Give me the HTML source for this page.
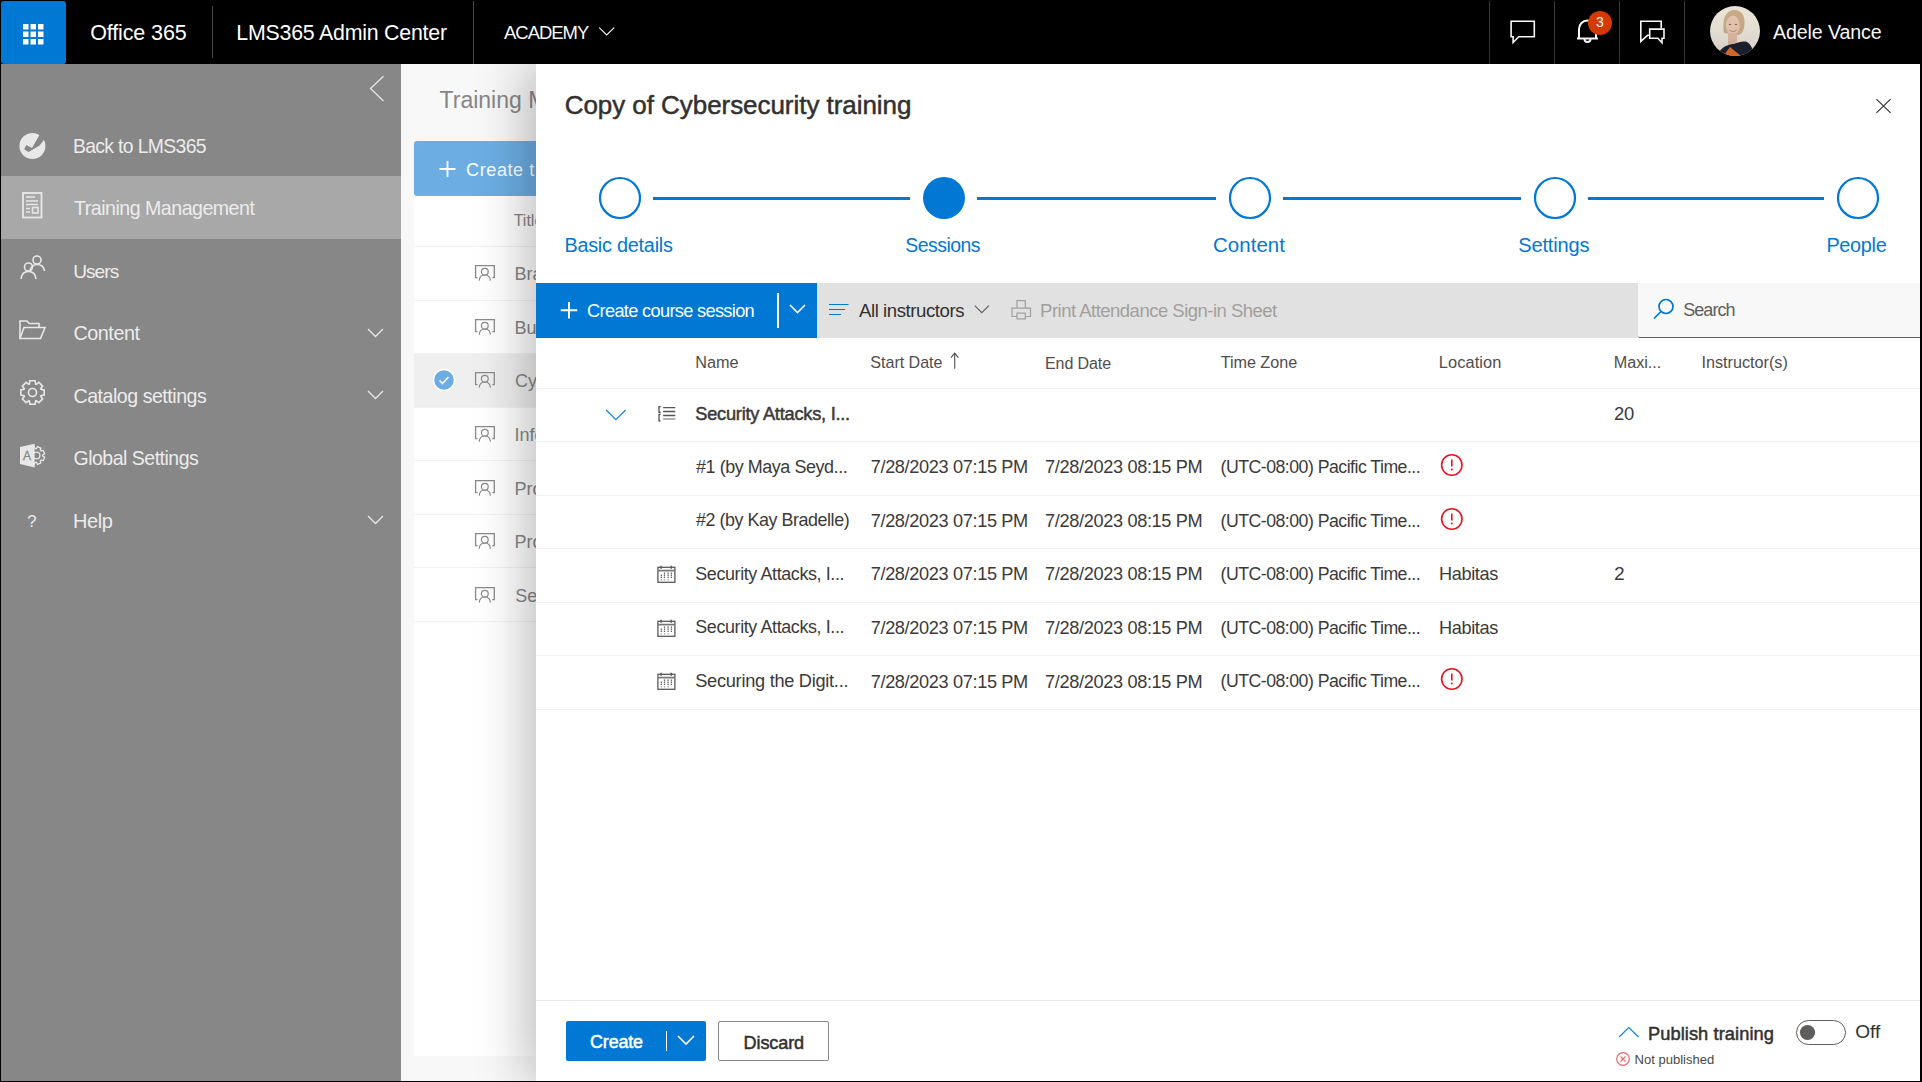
<!DOCTYPE html>
<html><head><meta charset="utf-8"><style>
html,body{margin:0;padding:0;}
body{width:1922px;height:1082px;background:#000;position:relative;overflow:hidden;font-family:"Liberation Sans", sans-serif;}
.t{position:absolute;white-space:nowrap;line-height:1;}
svg{display:block;}
</style></head><body>
<div style="position:absolute;left:1px;top:1px;width:1920px;height:63px;background:#000"></div><div style="position:absolute;left:1px;top:1px;width:65px;height:63px;background:#0078d4;border-radius:3px"></div><svg style="position:absolute;left:23px;top:24px;" width="22" height="22" viewBox="0 0 22 22"><rect x="0.0" y="0.0" width="5.5" height="5.5" fill="#fff"/><rect x="0.0" y="7.5" width="5.5" height="5.5" fill="#fff"/><rect x="0.0" y="15.0" width="5.5" height="5.5" fill="#fff"/><rect x="7.5" y="0.0" width="5.5" height="5.5" fill="#fff"/><rect x="7.5" y="7.5" width="5.5" height="5.5" fill="#fff"/><rect x="7.5" y="15.0" width="5.5" height="5.5" fill="#fff"/><rect x="15.0" y="0.0" width="5.5" height="5.5" fill="#fff"/><rect x="15.0" y="7.5" width="5.5" height="5.5" fill="#fff"/><rect x="15.0" y="15.0" width="5.5" height="5.5" fill="#fff"/></svg><div style="position:absolute;left:212px;top:6px;width:1px;height:52px;background:#4a4a4a"></div><div style="position:absolute;left:473px;top:1px;width:1px;height:63px;background:#4a4a4a"></div><div class="t" style="left:90.14px;top:22.99px;font-size:21.51px;color:#fff;font-weight:400;letter-spacing:-0.113px;">Office 365</div><div class="t" style="left:236.29px;top:23.13px;font-size:21.35px;color:#fff;font-weight:400;letter-spacing:-0.219px;">LMS365 Admin Center</div><div class="t" style="left:504.00px;top:24.06px;font-size:18.48px;color:#fff;font-weight:400;letter-spacing:-1.011px;">ACADEMY</div><svg style="position:absolute;left:597px;top:25px;" width="20" height="14" viewBox="0 0 20 14"><polyline points="2.2,2.6 9.7,10 17.2,2.6" fill="none" stroke="#fff" stroke-width="1.1"/></svg><div style="position:absolute;left:1489px;top:1px;width:1px;height:63px;background:#3a3a3a"></div><div style="position:absolute;left:1554px;top:1px;width:1px;height:63px;background:#3a3a3a"></div><div style="position:absolute;left:1619px;top:1px;width:1px;height:63px;background:#3a3a3a"></div><div style="position:absolute;left:1684px;top:1px;width:1px;height:63px;background:#3a3a3a"></div><svg style="position:absolute;left:1508px;top:18px;" width="30" height="28" viewBox="0 0 30 28"><path d="M3.1,3.3 H26.3 V18.8 H10.7 L5.1,24.5 V18.8 H3.1 Z" fill="none" stroke="#fff" stroke-width="1.6" stroke-linejoin="miter"/></svg><svg style="position:absolute;left:1574px;top:16px;" width="28" height="30" viewBox="0 0 28 30"><path d="M5,22.5 V13 a8.5,8.5 0 0 1 17,0 V22.5 M3,22.5 H24" fill="none" stroke="#fff" stroke-width="2"/><path d="M10.5,23 a3,3 0 0 0 6,0" fill="none" stroke="#fff" stroke-width="2"/></svg><svg style="position:absolute;left:1587px;top:10px;" width="26" height="26" viewBox="0 0 26 26"><circle cx="13" cy="13" r="12" fill="#d83b01"/><text x="13" y="17.3" text-anchor="middle" font-family="Liberation Sans" font-size="14" fill="#fff">3</text></svg><svg style="position:absolute;left:1638px;top:18px;" width="30" height="28" viewBox="0 0 30 28"><path d="M10.9,17.3 H9.5 L2.8,23.4 V3.3 H23.2 V10.3" fill="none" stroke="#fff" stroke-width="1.6"/><path d="M11.7,11.1 H26 V20.2 H24 V24.8 L19.8,20.2 H11.7 Z" fill="none" stroke="#fff" stroke-width="1.6"/></svg><svg style="position:absolute;left:1710px;top:6px;" width="50" height="50" viewBox="0 0 50 50"><defs><clipPath id="av"><circle cx="25" cy="25" r="25"/></clipPath><filter id="bl"><feGaussianBlur stdDeviation="0.6"/></filter></defs>
<g clip-path="url(#av)"><rect width="50" height="50" fill="#e9e3d8"/><g filter="url(#bl)">
<path d="M14,27 C12,16 14,5 24,4 C33,4 36,12 34,22 C33,26 31,28 29,29 Z" fill="#c9ab8a"/>
<ellipse cx="22.8" cy="19.5" rx="6.8" ry="10" fill="#e6c5b0"/>
<path d="M18,27 H27 V40 H18 Z" fill="#dcb9a3"/>
<path d="M9,46 C13,40 20,38 24,38 C29,36 33,35 37,36 C41,38 43,44 45,50 H9 Z" fill="#1f2433"/>
<path d="M14,49 L20,41 L31,50 L27,56 Z" fill="#e8702f"/><ellipse cx="20" cy="18.5" rx="1.3" ry="0.8" fill="#8a6a5a"/><ellipse cx="26" cy="18.5" rx="1.3" ry="0.8" fill="#8a6a5a"/><path d="M19.5,24.5 Q23,27 26.5,24.5" fill="none" stroke="#b8867a" stroke-width="1"/>
</g></g></svg><div class="t" style="left:1773.00px;top:23.08px;font-size:19.64px;color:#fff;font-weight:400;letter-spacing:-0.120px;">Adele Vance</div><div style="position:absolute;left:1px;top:64px;width:400px;height:1017px;background:#878787"></div><div style="position:absolute;left:1px;top:176px;width:400px;height:63px;background:#a8a8a8"></div><svg style="position:absolute;left:366px;top:74px;" width="22" height="30" viewBox="0 0 22 30"><polyline points="17.5,2.2 4.5,14.5 17.5,27" fill="none" stroke="#e8e8e8" stroke-width="1.25"/></svg><div class="t" style="left:72.95px;top:136.78px;font-size:19.39px;color:#ececec;font-weight:400;letter-spacing:-0.658px;">Back to LMS365</div><div class="t" style="left:74.11px;top:199.39px;font-size:19.62px;color:#ececec;font-weight:400;letter-spacing:-0.516px;">Training Management</div><div class="t" style="left:73.16px;top:261.84px;font-size:19.09px;color:#ececec;font-weight:400;letter-spacing:-0.935px;">Users</div><div class="t" style="left:73.51px;top:324.26px;font-size:19.77px;color:#ececec;font-weight:400;letter-spacing:-0.466px;">Content</div><div class="t" style="left:73.52px;top:386.93px;font-size:19.58px;color:#ececec;font-weight:400;letter-spacing:-0.474px;">Catalog settings</div><div class="t" style="left:73.52px;top:449.47px;font-size:19.53px;color:#ececec;font-weight:400;letter-spacing:-0.504px;">Global Settings</div><div class="t" style="left:72.90px;top:511.37px;font-size:20.00px;color:#ececec;font-weight:400;letter-spacing:-0.372px;">Help</div><svg style="position:absolute;left:365px;top:323.5px;" width="22" height="18" viewBox="0 0 22 18"><polyline points="3,5 10.5,12.5 18,5" fill="none" stroke="#e8e8e8" stroke-width="1.3"/></svg><svg style="position:absolute;left:365px;top:386px;" width="22" height="18" viewBox="0 0 22 18"><polyline points="3,5 10.5,12.5 18,5" fill="none" stroke="#e8e8e8" stroke-width="1.3"/></svg><svg style="position:absolute;left:365px;top:510.5px;" width="22" height="18" viewBox="0 0 22 18"><polyline points="3,5 10.5,12.5 18,5" fill="none" stroke="#e8e8e8" stroke-width="1.3"/></svg><svg style="position:absolute;left:19px;top:130px;" width="30" height="30" viewBox="0 0 30 30"><circle cx="13.4" cy="16" r="13" fill="#e8e8e8"/><path d="M5.1,19.3 L7.4,15 L13,18 L21.2,3.8 L26,8.5 L20.6,15.4 L9.5,21.9 Z" fill="#878787"/></svg><svg style="position:absolute;left:22px;top:192px;" width="22" height="28" viewBox="0 0 22 28"><rect x="1" y="1" width="18.5" height="24.5" fill="none" stroke="#e8e8e8" stroke-width="1.8"/><path d="M4,5 H13 M4,9 H16 M4,12.5 H16 M4,16.5 H8 M4,20 H8" stroke="#e8e8e8" stroke-width="1.6"/><rect x="10.5" y="15.5" width="5.5" height="5.5" fill="none" stroke="#e8e8e8" stroke-width="1.6"/></svg><svg style="position:absolute;left:19px;top:254px;" width="28" height="28" viewBox="0 0 28 28"><circle cx="18" cy="6" r="4" fill="none" stroke="#e8e8e8" stroke-width="1.6"/><path d="M11,17 C12,12 15,10.5 18,10.5 C22,10.5 25,13 25.5,17" fill="none" stroke="#e8e8e8" stroke-width="1.6"/><circle cx="9.5" cy="13" r="4" fill="none" stroke="#e8e8e8" stroke-width="1.6"/><path d="M2,25 C2.5,20 5.5,17.5 9.5,17.5 C13.5,17.5 16.5,20 17,25" fill="none" stroke="#e8e8e8" stroke-width="1.6"/></svg><svg style="position:absolute;left:18px;top:319px;" width="30" height="24" viewBox="0 0 30 24"><path d="M2,19.5 V2 H9 L11,4.5 H21 V8" fill="none" stroke="#e8e8e8" stroke-width="1.6"/><path d="M2,19.5 L6,8.5 H27 L22.5,19.5 Z" fill="none" stroke="#e8e8e8" stroke-width="1.6"/></svg><svg style="position:absolute;left:19px;top:379px;" width="28" height="28" viewBox="0 0 28 28"><g transform="translate(13.5,13.5)"><polygon points="11.71,-2.62 11.71,2.62 8.42,3.17 8.20,3.71 10.13,6.43 6.43,10.13 3.71,8.20 3.17,8.42 2.62,11.71 -2.62,11.71 -3.17,8.42 -3.71,8.20 -6.43,10.13 -10.13,6.43 -8.20,3.71 -8.42,3.17 -11.71,2.62 -11.71,-2.62 -8.42,-3.17 -8.20,-3.71 -10.13,-6.43 -6.43,-10.13 -3.71,-8.20 -3.17,-8.42 -2.62,-11.71 2.62,-11.71 3.17,-8.42 3.71,-8.20 6.43,-10.13 10.13,-6.43 8.20,-3.71 8.42,-3.17" fill="none" stroke="#e8e8e8" stroke-width="1.6"/><circle r="4" fill="none" stroke="#e8e8e8" stroke-width="1.6"/></g></svg><svg style="position:absolute;left:19px;top:442px;" width="30" height="28" viewBox="0 0 30 28"><polygon points="25.63,15.22 24.26,18.53 22.19,17.97 21.27,18.89 21.83,20.96 18.52,22.33 17.45,20.47 16.15,20.47 15.08,22.33 11.77,20.96 12.33,18.89 11.41,17.97 9.34,18.53 7.97,15.22 9.83,14.15 9.83,12.85 7.97,11.78 9.34,8.47 11.41,9.03 12.33,8.11 11.77,6.04 15.08,4.67 16.15,6.53 17.45,6.53 18.52,4.67 21.83,6.04 21.27,8.11 22.19,9.03 24.26,8.47 25.63,11.78 23.77,12.85 23.77,14.15" fill="none" stroke="#e8e8e8" stroke-width="1.3"/><circle cx="17.5" cy="13.5" r="3.4" fill="none" stroke="#e8e8e8" stroke-width="1.3"/><path d="M1,4.9 L15.6,1.7 V25.6 L1,21.9 Z" fill="#e8e8e8"/><text x="4.1" y="17.8" font-family="Liberation Sans" font-size="12" fill="#878787" stroke="#878787" stroke-width="0.3">A</text></svg><div class="t" style="left:27.33px;top:513.89px;font-size:16.67px;color:#ececec;font-weight:400;letter-spacing:0.000px;">?</div><div style="position:absolute;left:401px;top:64px;width:135px;height:1017px;background:#f8f8f8"></div><div class="t" style="left:439.54px;top:89.33px;font-size:23.00px;color:#878787;font-weight:400;letter-spacing:0.000px;">Training Management</div><div style="position:absolute;left:414px;top:141px;width:200px;height:55px;background:#6caee4;border-radius:3px"></div><svg style="position:absolute;left:438px;top:161px;" width="19" height="17" viewBox="0 0 19 17"><path d="M9.5,0 V16 M1.5,8 H17.5" stroke="#fff" stroke-width="1.8"/></svg><div class="t" style="left:466.10px;top:161.46px;font-size:18.00px;color:#fff;font-weight:400;letter-spacing:0.000px;letter-spacing:0.6px">Create training</div><div style="position:absolute;left:414px;top:196px;width:122px;height:860px;background:#fff"></div><div class="t" style="left:513.68px;top:212.96px;font-size:16.00px;color:#878787;font-weight:400;letter-spacing:0.000px;">Title</div><div style="position:absolute;left:414px;top:246px;width:122px;height:1px;background:#f3f3f3"></div><div style="position:absolute;left:414px;top:300px;width:122px;height:1px;background:#f3f3f3"></div><div style="position:absolute;left:414px;top:353px;width:122px;height:1px;background:#f3f3f3"></div><div style="position:absolute;left:414px;top:407px;width:122px;height:1px;background:#f3f3f3"></div><div style="position:absolute;left:414px;top:460px;width:122px;height:1px;background:#f3f3f3"></div><div style="position:absolute;left:414px;top:514px;width:122px;height:1px;background:#f3f3f3"></div><div style="position:absolute;left:414px;top:567px;width:122px;height:1px;background:#f3f3f3"></div><div style="position:absolute;left:414px;top:621px;width:122px;height:1px;background:#f3f3f3"></div><div style="position:absolute;left:414px;top:354px;width:122px;height:53px;background:#efefef"></div><svg style="position:absolute;left:432px;top:369px;" width="24" height="22" viewBox="0 0 24 22"><circle cx="12" cy="11" r="10.5" fill="#6caee4" stroke="#fff" stroke-width="1.5"/><polyline points="7.5,11.5 10.5,14.5 16.5,8" fill="none" stroke="#fff" stroke-width="1.6"/></svg><svg style="position:absolute;left:473px;top:263px;" width="24" height="20" viewBox="0 0 24 20"><path d="M4.5,14.6 H2.6 V2.7 H21.3 V14.6 H19.4" fill="none" stroke="#8a8a8a" stroke-width="1.3"/><circle cx="11.8" cy="8.7" r="3.4" fill="none" stroke="#8a8a8a" stroke-width="1.2"/><path d="M6.2,17.6 C6.5,13.8 8.8,12 11.8,12 C14.8,12 17.1,13.8 17.4,17.6" fill="none" stroke="#8a8a8a" stroke-width="1.2"/></svg><div class="t" style="left:514.56px;top:265.26px;font-size:18.00px;color:#878787;font-weight:400;letter-spacing:0.000px;">Brand training</div><svg style="position:absolute;left:473px;top:317px;" width="24" height="20" viewBox="0 0 24 20"><path d="M4.5,14.6 H2.6 V2.7 H21.3 V14.6 H19.4" fill="none" stroke="#8a8a8a" stroke-width="1.3"/><circle cx="11.8" cy="8.7" r="3.4" fill="none" stroke="#8a8a8a" stroke-width="1.2"/><path d="M6.2,17.6 C6.5,13.8 8.8,12 11.8,12 C14.8,12 17.1,13.8 17.4,17.6" fill="none" stroke="#8a8a8a" stroke-width="1.2"/></svg><div class="t" style="left:514.56px;top:319.26px;font-size:18.00px;color:#878787;font-weight:400;letter-spacing:0.000px;">Business training</div><svg style="position:absolute;left:473px;top:370px;" width="24" height="20" viewBox="0 0 24 20"><path d="M4.5,14.6 H2.6 V2.7 H21.3 V14.6 H19.4" fill="none" stroke="#8a8a8a" stroke-width="1.3"/><circle cx="11.8" cy="8.7" r="3.4" fill="none" stroke="#8a8a8a" stroke-width="1.2"/><path d="M6.2,17.6 C6.5,13.8 8.8,12 11.8,12 C14.8,12 17.1,13.8 17.4,17.6" fill="none" stroke="#8a8a8a" stroke-width="1.2"/></svg><div class="t" style="left:515.10px;top:372.26px;font-size:18.00px;color:#878787;font-weight:400;letter-spacing:0.000px;">Cybersecurity training</div><svg style="position:absolute;left:473px;top:424px;" width="24" height="20" viewBox="0 0 24 20"><path d="M4.5,14.6 H2.6 V2.7 H21.3 V14.6 H19.4" fill="none" stroke="#8a8a8a" stroke-width="1.3"/><circle cx="11.8" cy="8.7" r="3.4" fill="none" stroke="#8a8a8a" stroke-width="1.2"/><path d="M6.2,17.6 C6.5,13.8 8.8,12 11.8,12 C14.8,12 17.1,13.8 17.4,17.6" fill="none" stroke="#8a8a8a" stroke-width="1.2"/></svg><div class="t" style="left:514.38px;top:426.26px;font-size:18.00px;color:#878787;font-weight:400;letter-spacing:0.000px;">Information training</div><svg style="position:absolute;left:473px;top:478px;" width="24" height="20" viewBox="0 0 24 20"><path d="M4.5,14.6 H2.6 V2.7 H21.3 V14.6 H19.4" fill="none" stroke="#8a8a8a" stroke-width="1.3"/><circle cx="11.8" cy="8.7" r="3.4" fill="none" stroke="#8a8a8a" stroke-width="1.2"/><path d="M6.2,17.6 C6.5,13.8 8.8,12 11.8,12 C14.8,12 17.1,13.8 17.4,17.6" fill="none" stroke="#8a8a8a" stroke-width="1.2"/></svg><div class="t" style="left:514.56px;top:480.26px;font-size:18.00px;color:#878787;font-weight:400;letter-spacing:0.000px;">Product training</div><svg style="position:absolute;left:473px;top:531px;" width="24" height="20" viewBox="0 0 24 20"><path d="M4.5,14.6 H2.6 V2.7 H21.3 V14.6 H19.4" fill="none" stroke="#8a8a8a" stroke-width="1.3"/><circle cx="11.8" cy="8.7" r="3.4" fill="none" stroke="#8a8a8a" stroke-width="1.2"/><path d="M6.2,17.6 C6.5,13.8 8.8,12 11.8,12 C14.8,12 17.1,13.8 17.4,17.6" fill="none" stroke="#8a8a8a" stroke-width="1.2"/></svg><div class="t" style="left:514.56px;top:533.26px;font-size:18.00px;color:#878787;font-weight:400;letter-spacing:0.000px;">Project training</div><svg style="position:absolute;left:473px;top:585px;" width="24" height="20" viewBox="0 0 24 20"><path d="M4.5,14.6 H2.6 V2.7 H21.3 V14.6 H19.4" fill="none" stroke="#8a8a8a" stroke-width="1.3"/><circle cx="11.8" cy="8.7" r="3.4" fill="none" stroke="#8a8a8a" stroke-width="1.2"/><path d="M6.2,17.6 C6.5,13.8 8.8,12 11.8,12 C14.8,12 17.1,13.8 17.4,17.6" fill="none" stroke="#8a8a8a" stroke-width="1.2"/></svg><div class="t" style="left:515.28px;top:587.26px;font-size:18.00px;color:#878787;font-weight:400;letter-spacing:0.000px;">Security training</div><div style="position:absolute;left:536px;top:64px;width:1384px;height:1017px;background:#fff;box-shadow:-8px 0 50px rgba(0,0,0,0.28)"></div><div class="t" style="left:564.70px;top:92.00px;font-size:25.99px;color:#323130;font-weight:400;letter-spacing:-0.046px;-webkit-text-stroke:0.5px #323130;">Copy of Cybersecurity training</div><svg style="position:absolute;left:1874px;top:97px;" width="19" height="19" viewBox="0 0 19 19"><path d="M2.4,2.2 L16.6,15.8 M16.6,2.2 L2.4,15.8" stroke="#323130" stroke-width="1.15"/></svg><svg style="position:absolute;left:598px;top:175.5px;" width="44" height="44" viewBox="0 0 44 44"><circle cx="22" cy="22" r="20" fill="none" stroke="#0078d4" stroke-width="2.2"/></svg><svg style="position:absolute;left:922px;top:175.5px;" width="44" height="44" viewBox="0 0 44 44"><circle cx="22" cy="22" r="21" fill="#0078d4"/></svg><svg style="position:absolute;left:1228px;top:175.5px;" width="44" height="44" viewBox="0 0 44 44"><circle cx="22" cy="22" r="20" fill="none" stroke="#0078d4" stroke-width="2.2"/></svg><svg style="position:absolute;left:1533px;top:175.5px;" width="44" height="44" viewBox="0 0 44 44"><circle cx="22" cy="22" r="20" fill="none" stroke="#0078d4" stroke-width="2.2"/></svg><svg style="position:absolute;left:1835.5px;top:175.5px;" width="44" height="44" viewBox="0 0 44 44"><circle cx="22" cy="22" r="20" fill="none" stroke="#0078d4" stroke-width="2.2"/></svg><div style="position:absolute;left:653px;top:197px;width:257px;height:3px;background:#0078d4"></div><div style="position:absolute;left:977px;top:197px;width:239px;height:3px;background:#0078d4"></div><div style="position:absolute;left:1283px;top:197px;width:238px;height:3px;background:#0078d4"></div><div style="position:absolute;left:1588px;top:197px;width:235.5px;height:3px;background:#0078d4"></div><div class="t" style="left:564.42px;top:235.53px;font-size:19.81px;color:#0078d4;font-weight:400;letter-spacing:-0.220px;">Basic details</div><div class="t" style="left:905.22px;top:235.86px;font-size:19.42px;color:#0078d4;font-weight:400;letter-spacing:-0.493px;">Sessions</div><div class="t" style="left:1212.98px;top:235.01px;font-size:20.42px;color:#0078d4;font-weight:400;letter-spacing:0.076px;">Content</div><div class="t" style="left:1518.20px;top:235.35px;font-size:20.02px;color:#0078d4;font-weight:400;letter-spacing:-0.135px;">Settings</div><div class="t" style="left:1826.41px;top:235.52px;font-size:19.82px;color:#0078d4;font-weight:400;letter-spacing:-0.282px;">People</div><div style="position:absolute;left:817px;top:283px;width:821px;height:55px;background:#e1e1e1"></div><div style="position:absolute;left:536px;top:283px;width:281px;height:55px;background:#0078d4"></div><svg style="position:absolute;left:560px;top:301px;" width="19" height="19" viewBox="0 0 19 19"><path d="M9,1 V17.5 M0.8,9.25 H17.3" stroke="#fff" stroke-width="2"/></svg><div class="t" style="left:587.09px;top:302.38px;font-size:18.21px;color:#fff;font-weight:400;letter-spacing:-0.665px;">Create course session</div><div style="position:absolute;left:777px;top:293px;width:2px;height:35px;background:#fff"></div><svg style="position:absolute;left:788px;top:302px;" width="20" height="14" viewBox="0 0 20 14"><polyline points="2,3 9.5,10.5 17,3" fill="none" stroke="#fff" stroke-width="1.6"/></svg><svg style="position:absolute;left:826px;top:300px;" width="26" height="18" viewBox="0 0 26 18"><path d="M3,4.5 H22.5 M3,9.5 H19 M3,14.5 H15" stroke="#0078d4" stroke-width="1.2"/></svg><div class="t" style="left:859.00px;top:302.08px;font-size:18.57px;color:#323130;font-weight:400;letter-spacing:-0.423px;">All instructors</div><svg style="position:absolute;left:972px;top:302px;" width="20" height="14" viewBox="0 0 20 14"><polyline points="2.8,3.6 9.8,10.6 16.9,3.6" fill="none" stroke="#605e5c" stroke-width="1.15"/></svg><svg style="position:absolute;left:1009px;top:298px;" width="26" height="24" viewBox="0 0 26 24"><path d="M8,9.7 V2.6 H16.3 V9.7 M8,18.5 H3 V10.2 H21.5 V18.5 H16.3" fill="none" stroke="#a19f9d" stroke-width="1.2"/><rect x="8" y="15.1" width="8.3" height="5.8" fill="none" stroke="#a19f9d" stroke-width="1.2"/></svg><div class="t" style="left:1040.12px;top:302.15px;font-size:18.49px;color:#a19f9d;font-weight:400;letter-spacing:-0.504px;">Print Attendance Sign-in Sheet</div><div style="position:absolute;left:1638px;top:283px;width:282px;height:54px;background:#f8f8f8;border-bottom:1px solid #605e5c;border-bottom-left-radius:2px"></div><svg style="position:absolute;left:1651px;top:297px;" width="26" height="26" viewBox="0 0 26 26"><circle cx="15" cy="9.5" r="7" fill="none" stroke="#0078d4" stroke-width="1.7"/><path d="M10,14.5 L3,21.5" stroke="#0078d4" stroke-width="1.7"/></svg><div class="t" style="left:1683.28px;top:301.36px;font-size:18.00px;color:#605e5c;font-weight:400;letter-spacing:-0.961px;">Search</div><div class="t" style="left:695.20px;top:354.35px;font-size:16.25px;color:#4f4e4d;font-weight:400;letter-spacing:0.015px;">Name</div><div class="t" style="left:870.35px;top:354.44px;font-size:16.14px;color:#4f4e4d;font-weight:400;letter-spacing:-0.047px;">Start Date</div><div class="t" style="left:1045.02px;top:354.52px;font-size:16.05px;color:#4f4e4d;font-weight:400;letter-spacing:-0.107px;">End Date</div><div class="t" style="left:1220.68px;top:354.40px;font-size:16.18px;color:#4f4e4d;font-weight:400;letter-spacing:-0.029px;">Time Zone</div><div class="t" style="left:1438.69px;top:354.20px;font-size:16.42px;color:#4f4e4d;font-weight:400;letter-spacing:0.096px;">Location</div><div class="t" style="left:1613.70px;top:354.37px;font-size:16.22px;color:#4f4e4d;font-weight:400;letter-spacing:-0.006px;">Maxi...</div><div class="t" style="left:1701.54px;top:354.38px;font-size:16.21px;color:#4f4e4d;font-weight:400;letter-spacing:-0.011px;">Instructor(s)</div><svg style="position:absolute;left:947px;top:350px;" width="14" height="22" viewBox="0 0 14 22"><path d="M7.7,3.2 V18.7 M4,7.6 L7.7,3.2 L11.4,7.6" fill="none" stroke="#4f4e4d" stroke-width="1.1"/></svg><div style="position:absolute;left:536px;top:388px;width:1384px;height:1px;background:#f0f0f0"></div><div style="position:absolute;left:536px;top:441px;width:1384px;height:1px;background:#f0f0f0"></div><div style="position:absolute;left:536px;top:495px;width:1384px;height:1px;background:#f0f0f0"></div><div style="position:absolute;left:536px;top:548px;width:1384px;height:1px;background:#f0f0f0"></div><div style="position:absolute;left:536px;top:602px;width:1384px;height:1px;background:#f0f0f0"></div><div style="position:absolute;left:536px;top:655px;width:1384px;height:1px;background:#f0f0f0"></div><div style="position:absolute;left:536px;top:709px;width:1384px;height:1px;background:#f0f0f0"></div><svg style="position:absolute;left:603px;top:405px;" width="26" height="18" viewBox="0 0 26 18"><polyline points="3.2,5 12.9,14.6 22.6,5" fill="none" stroke="#1a86d9" stroke-width="1.3"/></svg><svg style="position:absolute;left:655px;top:403px;" width="24" height="22" viewBox="0 0 24 22"><path d="M5.6,3.6 H4 V9.4 H5.6 M5.6,11.3 H4 V17.8 H5.6" fill="none" stroke="#444" stroke-width="1.2"/><path d="M8.1,4.7 H20.3 M8.1,8.5 H20.3 M8.1,12.5 H20.3" stroke="#555" stroke-width="1.3"/><path d="M8.1,16 H20.3" stroke="#888" stroke-width="1.3"/></svg><div class="t" style="left:695.27px;top:405.26px;font-size:18.24px;color:#3b3a39;font-weight:400;letter-spacing:-0.249px;-webkit-text-stroke:0.5px #3b3a39;">Security Attacks, I...</div><div class="t" style="left:1614.08px;top:405.10px;font-size:18.43px;color:#3b3a39;font-weight:400;letter-spacing:-0.417px;">20</div><div class="t" style="left:696.00px;top:458.61px;font-size:17.95px;color:#3b3a39;font-weight:400;letter-spacing:-0.436px;">#1 (by Maya Seyd...</div><div class="t" style="left:870.69px;top:458.42px;font-size:18.17px;color:#3b3a39;font-weight:400;letter-spacing:-0.352px;">7/28/2023 07:15 PM</div><div class="t" style="left:1045.09px;top:458.42px;font-size:18.17px;color:#3b3a39;font-weight:400;letter-spacing:-0.349px;">7/28/2023 08:15 PM</div><div class="t" style="left:1220.54px;top:458.80px;font-size:17.72px;color:#3b3a39;font-weight:400;letter-spacing:-0.512px;">(UTC-08:00) Pacific Time...</div><svg style="position:absolute;left:1440px;top:453.3px;" width="24" height="24" viewBox="0 0 24 24"><circle cx="11.8" cy="12" r="10.2" fill="none" stroke="#e81123" stroke-width="1.6"/><path d="M11.8,6.5 V13.5" stroke="#e81123" stroke-width="1.6"/><circle cx="11.8" cy="16.5" r="1" fill="#e81123"/></svg><div class="t" style="left:696.00px;top:512.35px;font-size:17.90px;color:#3b3a39;font-weight:400;letter-spacing:-0.447px;">#2 (by Kay Bradelle)</div><div class="t" style="left:870.69px;top:512.12px;font-size:18.17px;color:#3b3a39;font-weight:400;letter-spacing:-0.352px;">7/28/2023 07:15 PM</div><div class="t" style="left:1045.09px;top:512.12px;font-size:18.17px;color:#3b3a39;font-weight:400;letter-spacing:-0.349px;">7/28/2023 08:15 PM</div><div class="t" style="left:1220.54px;top:512.50px;font-size:17.72px;color:#3b3a39;font-weight:400;letter-spacing:-0.512px;">(UTC-08:00) Pacific Time...</div><svg style="position:absolute;left:1440px;top:507px;" width="24" height="24" viewBox="0 0 24 24"><circle cx="11.8" cy="12" r="10.2" fill="none" stroke="#e81123" stroke-width="1.6"/><path d="M11.8,6.5 V13.5" stroke="#e81123" stroke-width="1.6"/><circle cx="11.8" cy="16.5" r="1" fill="#e81123"/></svg><div class="t" style="left:695.28px;top:565.53px;font-size:17.92px;color:#3b3a39;font-weight:400;letter-spacing:-0.383px;">Security Attacks, I...</div><div class="t" style="left:870.69px;top:565.32px;font-size:18.17px;color:#3b3a39;font-weight:400;letter-spacing:-0.352px;">7/28/2023 07:15 PM</div><div class="t" style="left:1045.09px;top:565.32px;font-size:18.17px;color:#3b3a39;font-weight:400;letter-spacing:-0.349px;">7/28/2023 08:15 PM</div><div class="t" style="left:1220.54px;top:565.70px;font-size:17.72px;color:#3b3a39;font-weight:400;letter-spacing:-0.512px;">(UTC-08:00) Pacific Time...</div><div class="t" style="left:1438.95px;top:565.32px;font-size:18.17px;color:#3b3a39;font-weight:400;letter-spacing:-0.367px;">Habitas</div><svg style="position:absolute;left:655px;top:563.2px;" width="24" height="22" viewBox="0 0 24 22"><rect x="2.9" y="4.3" width="17" height="15" fill="none" stroke="#5a5958" stroke-width="1.3"/><path d="M2.9,7.6 H19.9" stroke="#777" stroke-width="1.7"/><path d="M6.1,2.8 V5.8 M16.2,2.8 V5.8" stroke="#5a5958" stroke-width="1.5"/><rect x="8.85" y="9.55" width="1.3" height="1.3" fill="#555" opacity="1"/><rect x="12.45" y="9.55" width="1.3" height="1.3" fill="#555" opacity="1"/><rect x="15.75" y="9.55" width="1.3" height="1.3" fill="#555" opacity="1"/><rect x="5.65" y="11.55" width="1.3" height="1.3" fill="#555" opacity="1"/><rect x="8.85" y="11.55" width="1.3" height="1.3" fill="#555" opacity="1"/><rect x="12.45" y="11.55" width="1.3" height="1.3" fill="#555" opacity="1"/><rect x="15.75" y="11.55" width="1.3" height="1.3" fill="#555" opacity="1"/><rect x="5.65" y="13.65" width="1.3" height="1.3" fill="#555" opacity="1"/><rect x="8.85" y="13.65" width="1.3" height="1.3" fill="#555" opacity="1"/><rect x="12.45" y="13.65" width="1.3" height="1.3" fill="#555" opacity="1"/><rect x="15.75" y="13.65" width="1.3" height="1.3" fill="#555" opacity="1"/><rect x="5.65" y="16.15" width="1.3" height="1.3" fill="#555" opacity="0.55"/><rect x="8.85" y="16.15" width="1.3" height="1.3" fill="#555" opacity="0.55"/><rect x="12.45" y="16.15" width="1.3" height="1.3" fill="#555" opacity="0.55"/></svg><div class="t" style="left:695.28px;top:619.33px;font-size:17.92px;color:#3b3a39;font-weight:400;letter-spacing:-0.383px;">Security Attacks, I...</div><div class="t" style="left:870.69px;top:619.12px;font-size:18.17px;color:#3b3a39;font-weight:400;letter-spacing:-0.352px;">7/28/2023 07:15 PM</div><div class="t" style="left:1045.09px;top:619.12px;font-size:18.17px;color:#3b3a39;font-weight:400;letter-spacing:-0.349px;">7/28/2023 08:15 PM</div><div class="t" style="left:1220.54px;top:619.50px;font-size:17.72px;color:#3b3a39;font-weight:400;letter-spacing:-0.512px;">(UTC-08:00) Pacific Time...</div><div class="t" style="left:1438.95px;top:619.12px;font-size:18.17px;color:#3b3a39;font-weight:400;letter-spacing:-0.367px;">Habitas</div><svg style="position:absolute;left:655px;top:617px;" width="24" height="22" viewBox="0 0 24 22"><rect x="2.9" y="4.3" width="17" height="15" fill="none" stroke="#5a5958" stroke-width="1.3"/><path d="M2.9,7.6 H19.9" stroke="#777" stroke-width="1.7"/><path d="M6.1,2.8 V5.8 M16.2,2.8 V5.8" stroke="#5a5958" stroke-width="1.5"/><rect x="8.85" y="9.55" width="1.3" height="1.3" fill="#555" opacity="1"/><rect x="12.45" y="9.55" width="1.3" height="1.3" fill="#555" opacity="1"/><rect x="15.75" y="9.55" width="1.3" height="1.3" fill="#555" opacity="1"/><rect x="5.65" y="11.55" width="1.3" height="1.3" fill="#555" opacity="1"/><rect x="8.85" y="11.55" width="1.3" height="1.3" fill="#555" opacity="1"/><rect x="12.45" y="11.55" width="1.3" height="1.3" fill="#555" opacity="1"/><rect x="15.75" y="11.55" width="1.3" height="1.3" fill="#555" opacity="1"/><rect x="5.65" y="13.65" width="1.3" height="1.3" fill="#555" opacity="1"/><rect x="8.85" y="13.65" width="1.3" height="1.3" fill="#555" opacity="1"/><rect x="12.45" y="13.65" width="1.3" height="1.3" fill="#555" opacity="1"/><rect x="15.75" y="13.65" width="1.3" height="1.3" fill="#555" opacity="1"/><rect x="5.65" y="16.15" width="1.3" height="1.3" fill="#555" opacity="0.55"/><rect x="8.85" y="16.15" width="1.3" height="1.3" fill="#555" opacity="0.55"/><rect x="12.45" y="16.15" width="1.3" height="1.3" fill="#555" opacity="0.55"/></svg><div class="t" style="left:695.27px;top:672.49px;font-size:18.20px;color:#3b3a39;font-weight:400;letter-spacing:-0.275px;">Securing the Digit...</div><div class="t" style="left:870.69px;top:672.52px;font-size:18.17px;color:#3b3a39;font-weight:400;letter-spacing:-0.352px;">7/28/2023 07:15 PM</div><div class="t" style="left:1045.09px;top:672.52px;font-size:18.17px;color:#3b3a39;font-weight:400;letter-spacing:-0.349px;">7/28/2023 08:15 PM</div><div class="t" style="left:1220.54px;top:672.90px;font-size:17.72px;color:#3b3a39;font-weight:400;letter-spacing:-0.512px;">(UTC-08:00) Pacific Time...</div><svg style="position:absolute;left:1440px;top:667.4px;" width="24" height="24" viewBox="0 0 24 24"><circle cx="11.8" cy="12" r="10.2" fill="none" stroke="#e81123" stroke-width="1.6"/><path d="M11.8,6.5 V13.5" stroke="#e81123" stroke-width="1.6"/><circle cx="11.8" cy="16.5" r="1" fill="#e81123"/></svg><svg style="position:absolute;left:655px;top:670.4px;" width="24" height="22" viewBox="0 0 24 22"><rect x="2.9" y="4.3" width="17" height="15" fill="none" stroke="#5a5958" stroke-width="1.3"/><path d="M2.9,7.6 H19.9" stroke="#777" stroke-width="1.7"/><path d="M6.1,2.8 V5.8 M16.2,2.8 V5.8" stroke="#5a5958" stroke-width="1.5"/><rect x="8.85" y="9.55" width="1.3" height="1.3" fill="#555" opacity="1"/><rect x="12.45" y="9.55" width="1.3" height="1.3" fill="#555" opacity="1"/><rect x="15.75" y="9.55" width="1.3" height="1.3" fill="#555" opacity="1"/><rect x="5.65" y="11.55" width="1.3" height="1.3" fill="#555" opacity="1"/><rect x="8.85" y="11.55" width="1.3" height="1.3" fill="#555" opacity="1"/><rect x="12.45" y="11.55" width="1.3" height="1.3" fill="#555" opacity="1"/><rect x="15.75" y="11.55" width="1.3" height="1.3" fill="#555" opacity="1"/><rect x="5.65" y="13.65" width="1.3" height="1.3" fill="#555" opacity="1"/><rect x="8.85" y="13.65" width="1.3" height="1.3" fill="#555" opacity="1"/><rect x="12.45" y="13.65" width="1.3" height="1.3" fill="#555" opacity="1"/><rect x="15.75" y="13.65" width="1.3" height="1.3" fill="#555" opacity="1"/><rect x="5.65" y="16.15" width="1.3" height="1.3" fill="#555" opacity="0.55"/><rect x="8.85" y="16.15" width="1.3" height="1.3" fill="#555" opacity="0.55"/><rect x="12.45" y="16.15" width="1.3" height="1.3" fill="#555" opacity="0.55"/></svg><div class="t" style="left:1614.04px;top:564.44px;font-size:19.20px;color:#3b3a39;font-weight:400;letter-spacing:0.167px;">2</div><div style="position:absolute;left:536px;top:1000px;width:1384px;height:1px;background:#edebe9"></div><div style="position:absolute;left:566px;top:1021px;width:140px;height:40px;background:#0078d4;border-radius:2px"></div><div class="t" style="left:590.10px;top:1034.09px;font-size:17.96px;color:#fff;font-weight:400;letter-spacing:-0.174px;-webkit-text-stroke:0.5px #fff;">Create</div><div style="position:absolute;left:666px;top:1031px;width:1px;height:20px;background:#fff"></div><svg style="position:absolute;left:676px;top:1033px;" width="20" height="14" viewBox="0 0 20 14"><polyline points="2,3 10,11 18,3" fill="none" stroke="#fff" stroke-width="1.6"/></svg><div style="position:absolute;left:718px;top:1021px;width:111px;height:40px;box-sizing:border-box;border:1px solid #8a8886;border-radius:2px;background:#fff"></div><div class="t" style="left:743.55px;top:1034.00px;font-size:18.07px;color:#323130;font-weight:400;letter-spacing:-0.101px;-webkit-text-stroke:0.5px #323130;">Discard</div><svg style="position:absolute;left:1616px;top:1024px;" width="26" height="16" viewBox="0 0 26 16"><polyline points="3,13 12.8,3.5 22.5,13" fill="none" stroke="#1a86d9" stroke-width="1.25"/></svg><div class="t" style="left:1647.94px;top:1024.53px;font-size:18.28px;color:#323130;font-weight:400;letter-spacing:0.073px;-webkit-text-stroke:0.5px #323130;">Publish training</div><div style="position:absolute;left:1796px;top:1020px;width:50px;height:25px;box-sizing:border-box;border:1px solid #605e5c;border-radius:13px"></div><svg style="position:absolute;left:1799px;top:1024px;" width="17" height="17" viewBox="0 0 17 17"><circle cx="8.5" cy="8.5" r="7.6" fill="#605e5c"/></svg><div class="t" style="left:1855.24px;top:1021.73px;font-size:19.10px;color:#323130;font-weight:400;letter-spacing:0.000px;">Off</div><svg style="position:absolute;left:1615px;top:1051px;" width="16" height="16" viewBox="0 0 16 16"><circle cx="8" cy="8" r="6.3" fill="none" stroke="#e86b6b" stroke-width="1.2"/><path d="M5.5,5.5 L10.5,10.5 M10.5,5.5 L5.5,10.5" stroke="#e86b6b" stroke-width="1.2"/></svg><div class="t" style="left:1634.46px;top:1053.16px;font-size:13.05px;color:#4a4948;font-weight:400;letter-spacing:0.000px;">Not published</div>
</body></html>
